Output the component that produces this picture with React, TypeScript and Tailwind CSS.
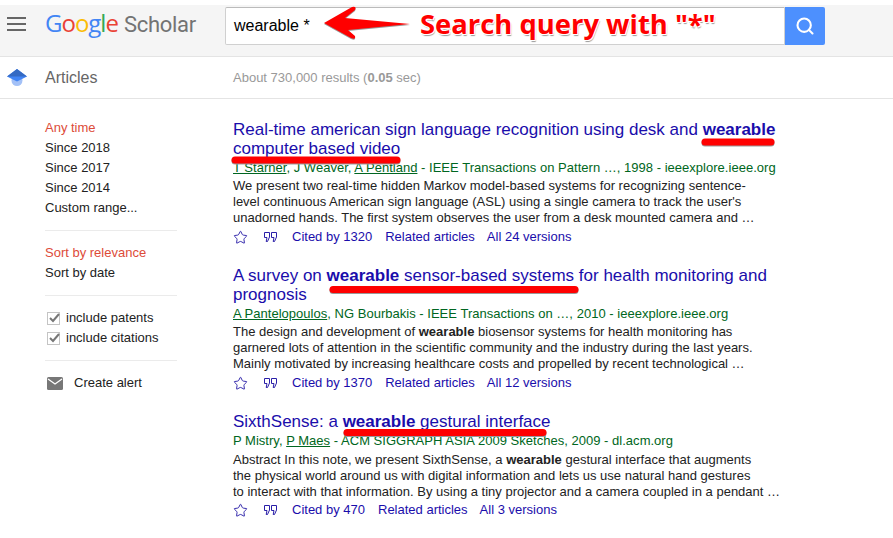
import { Search, Star } from "lucide-react";

const results = [
  {
    title: (
      <>
        Real-time american sign language recognition using desk and <b>wearable</b> computer based video
      </>
    ),
    meta: (
      <>
        <u>T Starner</u>, J Weaver, <u>A Pentland</u> - IEEE Transactions on Pattern …, 1998 - ieeexplore.ieee.org
      </>
    ),
    lines: [
      <>We present two real-time hidden Markov model-based systems for recognizing sentence-</>,
      <>level continuous American sign language (ASL) using a single camera to track the user's</>,
      <>unadorned hands. The first system observes the user from a desk mounted camera and …</>,
    ],
    cited: "Cited by 1320",
    versions: "All 24 versions",
  },
  {
    title: (
      <>
        A survey on <b>wearable</b> sensor-based systems for health monitoring and prognosis
      </>
    ),
    meta: (
      <>
        <u>A Pantelopoulos</u>, NG Bourbakis - IEEE Transactions on …, 2010 - ieeexplore.ieee.org
      </>
    ),
    lines: [
      <>
        The design and development of <b>wearable</b> biosensor systems for health monitoring has
      </>,
      <>garnered lots of attention in the scientific community and the industry during the last years.</>,
      <>Mainly motivated by increasing healthcare costs and propelled by recent technological …</>,
    ],
    cited: "Cited by 1370",
    versions: "All 12 versions",
  },
  {
    title: (
      <>
        SixthSense: a <b>wearable</b> gestural interface
      </>
    ),
    meta: (
      <>
        P Mistry, <u>P Maes</u> - ACM SIGGRAPH ASIA 2009 Sketches, 2009 - dl.acm.org
      </>
    ),
    lines: [
      <>
        Abstract In this note, we present SixthSense, a <b>wearable</b> gestural interface that augments
      </>,
      <>the physical world around us with digital information and lets us use natural hand gestures</>,
      <>to interact with that information. By using a tiny projector and a camera coupled in a pendant …</>,
    ],
    cited: "Cited by 470",
    versions: "All 3 versions",
  },
];

function QuoteIcon() {
  return (
    <svg width="15" height="12" viewBox="0 0 15 12" className="shrink-0 text-[#2a1fa8]" fill="none" stroke="currentColor" strokeWidth="1">
      <path d="M1.500 1.500h5v4.500L4.500 10.500H3.200L4 6.500H1.500z" />
      <path d="M8.500 1.500h5v4.500L11.500 10.500H10.200L11 6.500H8.500z" />
    </svg>
  );
}

function ScholarIcon() {
  return (
    <svg width="28" height="20" viewBox="0 0 28 20">
      <circle cx="14" cy="12.500" r="5.500" fill="#a3c1f7" />
      <path d="M4 8.500L14 1l10 7.500-10 5z" fill="#4285f4" />
      <path d="M14 1l10 7.500H4z" fill="#356ac3" />
    </svg>
  );
}

function CheckRow({ label }: { label: string }) {
  return (
    <div className="flex h-5 items-center">
      <span className="relative ml-[2px] h-[13px] w-[13px] border border-[#c4c4c4] bg-white">
        <svg width="13" height="12" viewBox="0 0 13 12" className="absolute left-0 top-[-1px]">
          <path d="M2 6l3 3 6-7" fill="none" stroke="#777777" strokeWidth="2" />
        </svg>
      </span>
      <span className="ml-[6px]">{label}</span>
    </div>
  );
}

function Divider() {
  return <div className="my-3 h-px w-[132px] bg-[#ebebeb]" />;
}

export default function App() {
  return (
    <div className="relative h-[538px] w-[893px] overflow-hidden bg-white font-['Liberation_Sans',Arial,sans-serif] text-[13px] text-[#222222]">
      <div className="mt-[5px] flex h-[52px] border-b border-[#e4e4e4] bg-[#f5f5f5] pt-[2px]">
        <div className="ml-[7px] mt-[10px] flex h-[14px] w-[19px] flex-col gap-[4px]">
          <span className="h-[2px] bg-[#666666]" />
          <span className="h-[2px] bg-[#666666]" />
          <span className="h-[2px] bg-[#666666]" />
        </div>
        <div className="ml-[19px] mt-[4px] flex h-[26px] w-[180px] items-baseline whitespace-nowrap font-['Open_Sans',sans-serif] text-[24px] leading-none tracking-[-1px]">
          <span className="text-[#4285f4]">G</span>
          <span className="text-[#ea4335]">o</span>
          <span className="text-[#fbbc05]">o</span>
          <span className="text-[#4285f4]">g</span>
          <span className="text-[#34a853]">l</span>
          <span className="text-[#ea4335]">e</span>
          <span className="ml-[6px] font-['Roboto',sans-serif] text-[22px] tracking-[-0.3px] text-[#737373]">Scholar</span>
        </div>
        <div className="flex h-[38px] w-[560px] items-center rounded-l-[2px] border border-[#d0d0d0] border-t-[#bbbbbb] bg-white pl-2 text-base text-black">
          wearable *
        </div>
        <div className="flex h-[38px] w-10 items-center justify-center rounded-r-[2px] bg-[#4d90fe]">
          <Search size={20} strokeWidth={2.5} className="text-white" />
        </div>
      </div>

      <div className="flex h-[42px] items-center border-b border-[#e4e4e4]">
        <div className="ml-[3px] w-[42px]">
          <ScholarIcon />
        </div>
        <div className="w-[188px] text-base text-[#666666]">Articles</div>
        <div className="text-[#999999]">
          About 730,000 results (<b>0.05</b> sec)
        </div>
      </div>

      <div className="flex">
        <aside className="ml-[45px] mt-[19px] w-[188px] shrink-0 leading-5">
          <div className="text-[#dd4b39]">Any time</div>
          <div>Since 2018</div>
          <div>Since 2017</div>
          <div>Since 2014</div>
          <div>Custom range...</div>
          <Divider />
          <div className="text-[#dd4b39]">Sort by relevance</div>
          <div>Sort by date</div>
          <Divider />
          <CheckRow label="include patents" />
          <CheckRow label="include citations" />
          <Divider />
          <div className="flex h-5 items-center">
            <svg width="16" height="13" viewBox="0 0 16 13" className="ml-[2px] shrink-0">
              <rect width="16" height="13" rx="1.500" fill="#777777" />
              <path d="M1 2l7 5 7-5" fill="none" stroke="#ffffff" strokeWidth="1.300" />
            </svg>
            <span className="ml-[11px]">Create alert</span>
          </div>
        </aside>

        <main className="mt-[21px] w-[548px] shrink-0">
          {results.map((r, i) => (
            <div key={i} className="mb-5">
              <div className="text-[17px] leading-[19px] text-[#1a0dab]">{r.title}</div>
              <div className="mb-px mt-px whitespace-nowrap leading-[18px] tracking-[0.02px] text-[#006621]">{r.meta}</div>
              <div className={i === 2 ? "mt-[2px] whitespace-nowrap leading-4" : "whitespace-nowrap leading-4"}>
                {r.lines.map((line, j) => (
                  <div key={j}>{line}</div>
                ))}
              </div>
              <div className={`${i === 2 ? "mt-px" : "mt-[2px]"} flex h-[18px] items-center whitespace-nowrap text-[#1a0dab]`}>
                <Star size={15} strokeWidth={1.500} className="mr-[15px] shrink-0 text-[#2a1fa8]" />
                <QuoteIcon />
                <span className="ml-[14px]">{r.cited}</span>
                <span className="ml-[13px]">Related articles</span>
                <span className="ml-[12px]">{r.versions}</span>
              </div>
            </div>
          ))}
        </main>
      </div>

      {/* annotations */}
      <svg width="893" height="538" className="pointer-events-none absolute left-0 top-0 drop-shadow-[0_1px_0_#999999]">
        <path d="M324 23 L352 7 Q357 6 355 10 L345 18 L410 24 L348 30 L355 36 Q356 40 351 38 Z" fill="#ff0000" />
        <g stroke="#ff0000" strokeWidth="7" strokeLinecap="round" fill="none">
          <path d="M235 160H397" />
          <path d="M705 142H771" />
          <path d="M333 289.500H575" />
          <path d="M347 432.500H543" />
        </g>
      </svg>
      <div className="absolute left-[420px] top-[4px] whitespace-nowrap font-['Open_Sans',sans-serif] text-[27.4px] font-bold leading-10 text-[#ff0000] [text-shadow:1px_1px_0_#fff,-1px_-1px_0_#fff,1px_-1px_0_#fff,-1px_1px_0_#fff,1px_2px_1px_#999]">
        Search query with "*"
      </div>
    </div>
  );
}
